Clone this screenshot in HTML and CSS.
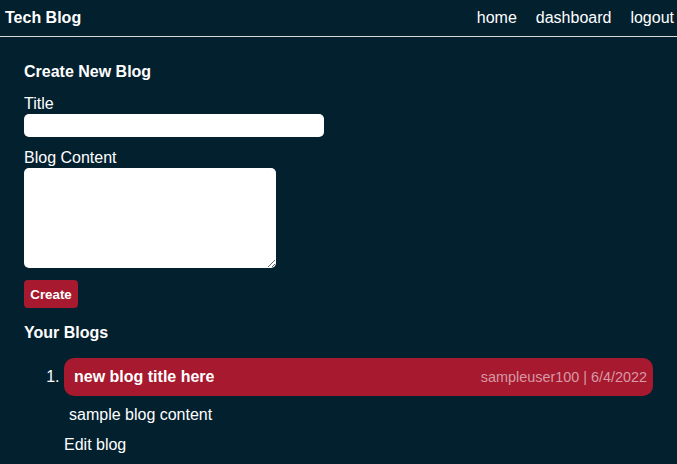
FILE: index.html
```html
<!DOCTYPE html>
<html>
<head>
<meta charset="utf-8">
<link rel="stylesheet" href="styles.css">
</head>
<body>
<header class="topbar">
  <div class="brand">Tech Blog</div>
  <nav class="nav">
    <a href="#">home</a>
    <a href="#">dashboard</a>
    <a href="#">logout</a>
  </nav>
</header>
<main class="main">
  <h2 class="section-title">Create New Blog</h2>
  <form class="form">
    <label class="label">Title</label>
    <input class="title-input" type="text">
    <label class="label label-content">Blog Content</label>
    <textarea class="content-input"></textarea>
    <button class="create-btn" type="button">Create</button>
  </form>
  <h2 class="section-title your">Your Blogs</h2>
  <ol class="blogs">
    <li class="blog">
      <div class="blog-head">
        <span class="blog-title">new blog title here</span>
        <span class="blog-meta">sampleuser100 | 6/4/2022</span>
      </div>
      <p class="blog-body">sample blog content</p>
      <a class="edit" href="#">Edit blog</a>
    </li>
  </ol>
</main>
</body>
</html>
```
FILE: styles.css
```css
* { box-sizing: border-box; }
html, body { margin: 0; padding: 0; }
body {
  background: #03202f;
  color: #ffffff;
  font-family: "Liberation Sans", Arial, sans-serif;
  font-size: 16px;
  height: 464px;
  overflow: hidden;
}
.topbar {
  display: flex;
  justify-content: space-between;
  align-items: center;
  height: 37px;
  padding: 0 3px 1px 5px;
  border-bottom: 1px solid #d9d9d9;
}
.brand { font-weight: bold; font-size: 16px; }
.nav { display: flex; gap: 19px; }
.nav a { color: #fff; text-decoration: none; font-size: 16px; }
.main { padding: 0 24px; }
.section-title {
  font-size: 16px;
  line-height: 18px;
  font-weight: bold;
  margin: 26px 0 14px;
}
.form { display: flex; flex-direction: column; align-items: flex-start; }
.label { font-size: 16px; line-height: 18px; }
.title-input {
  width: 300px;
  height: 23px;
  border: none;
  border-radius: 5px;
  margin-top: 1px;
  background: #fff;
}
.label-content { margin-top: 12px; }
.content-input {
  width: 252px;
  height: 100px;
  border: none;
  border-radius: 5px;
  margin-top: 1px;
  background: #fff;
}
.create-btn {
  margin-top: 12px;
  background: #a6192e;
  color: #fff;
  border: none;
  border-radius: 4px;
  font-family: "Liberation Sans", Arial, sans-serif;
  font-weight: bold;
  font-size: 13.33px;
  width: 54px;
  height: 28px;
  padding: 0;
}
.section-title.your { margin: 16px 0 0; }
.blogs { margin: 16px 0 0; padding-left: 40px; }
.blog-head {
  display: flex;
  justify-content: space-between;
  align-items: center;
  background: #a6192e;
  border-radius: 10px;
  height: 38px;
  padding: 0 6px 0 10px;
}
.blog-title { font-weight: bold; font-size: 16px; }
.blog-meta { color: #d79aa6; font-size: 14.4px; }
.blog-body { margin: 10px 0 0 5px; font-size: 16px; }
.edit { display: block; margin-top: 12px; color: #fff; text-decoration: none; }
```
